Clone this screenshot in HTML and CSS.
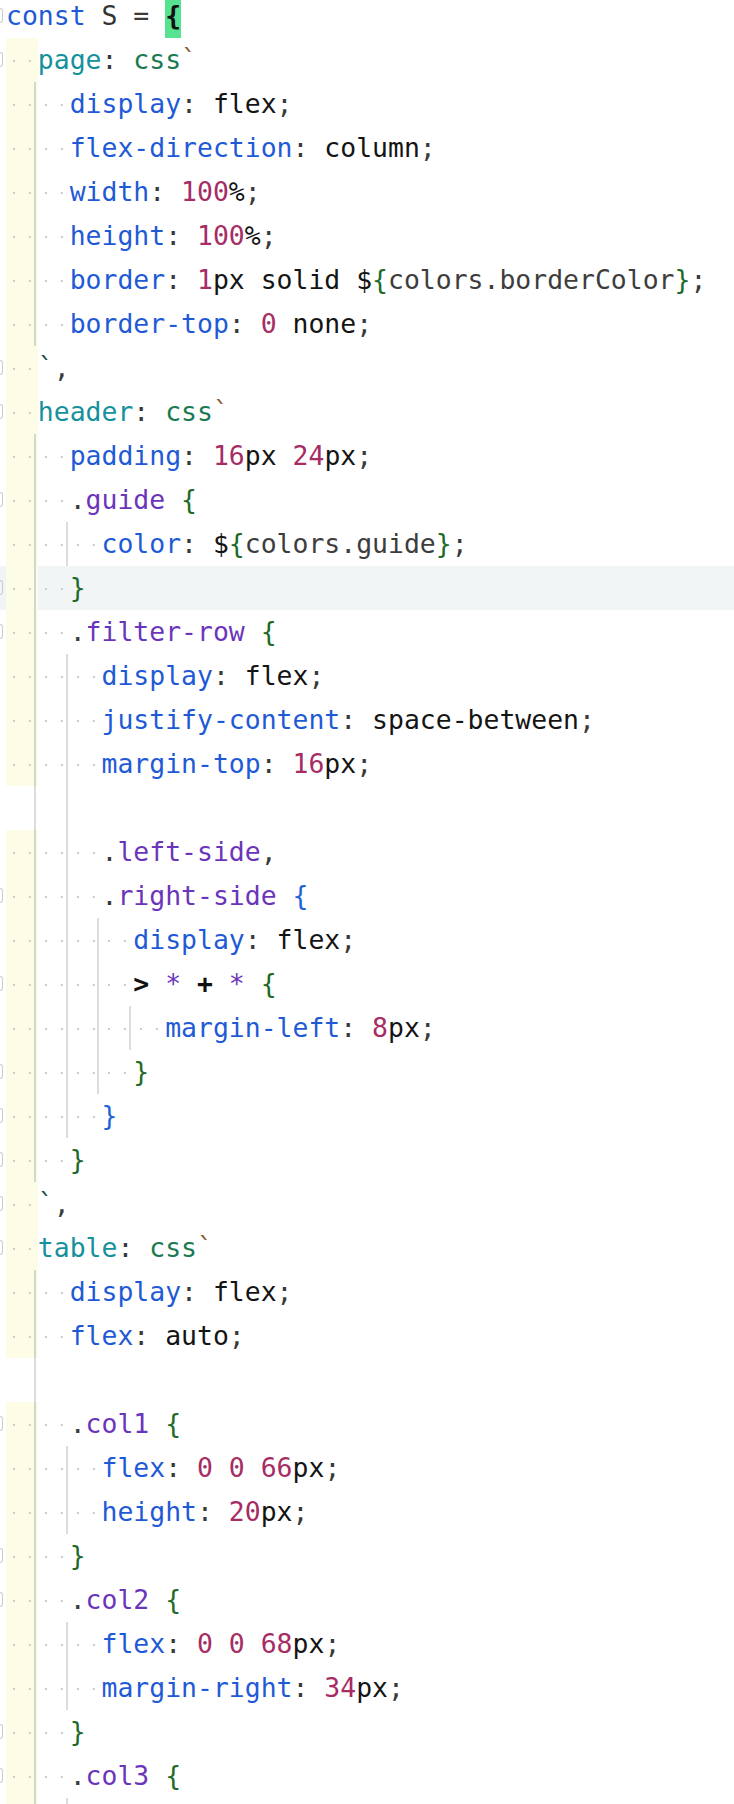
FILE: index.html
```html
<!DOCTYPE html>
<html>
<head>
<meta charset="utf-8">
<link rel="stylesheet" href="styles.css">
</head>
<body>
<div class="ed">
<div class="ln"><span class="g f"></span><span class="c"><span class="k">const</span><span class="v"> S </span><span class="p">=</span> <span class="bm">{</span></span></div>
<div class="ln"><span class="g f"></span><span class="i y"></span><span class="c"><span class="key">page</span><span class="p">:</span> <span class="fn">css</span><span class="bt">`</span></span></div>
<div class="ln"><span class="g"></span><span class="i y gd"></span><span class="i"></span><span class="c"><span class="k">display</span><span class="p">:</span> <span class="t">flex</span><span class="p">;</span></span></div>
<div class="ln"><span class="g"></span><span class="i y gd"></span><span class="i"></span><span class="c"><span class="k">flex-direction</span><span class="p">:</span> <span class="t">column</span><span class="p">;</span></span></div>
<div class="ln"><span class="g"></span><span class="i y gd"></span><span class="i"></span><span class="c"><span class="k">width</span><span class="p">:</span> <span class="n">100</span><span class="t">%</span><span class="p">;</span></span></div>
<div class="ln"><span class="g"></span><span class="i y gd"></span><span class="i"></span><span class="c"><span class="k">height</span><span class="p">:</span> <span class="n">100</span><span class="t">%</span><span class="p">;</span></span></div>
<div class="ln"><span class="g"></span><span class="i y gd"></span><span class="i"></span><span class="c"><span class="k">border</span><span class="p">:</span> <span class="n">1</span><span class="t">px solid $</span><span class="br1">{</span><span class="iv">colors.borderColor</span><span class="br1">}</span><span class="p">;</span></span></div>
<div class="ln"><span class="g"></span><span class="i y gd"></span><span class="i"></span><span class="c"><span class="k">border-top</span><span class="p">:</span> <span class="n">0</span> <span class="t">none</span><span class="p">;</span></span></div>
<div class="ln"><span class="g f"></span><span class="i y"></span><span class="c"><span class="bt2">`</span><span class="p">,</span></span></div>
<div class="ln"><span class="g f"></span><span class="i y"></span><span class="c"><span class="key">header</span><span class="p">:</span> <span class="fn">css</span><span class="bt">`</span></span></div>
<div class="ln"><span class="g"></span><span class="i y gd"></span><span class="i"></span><span class="c"><span class="k">padding</span><span class="p">:</span> <span class="n">16</span><span class="t">px </span><span class="n">24</span><span class="t">px</span><span class="p">;</span></span></div>
<div class="ln"><span class="g f"></span><span class="i y gd"></span><span class="i"></span><span class="c"><span class="p">.</span><span class="s">guide</span> <span class="br1">{</span></span></div>
<div class="ln"><span class="g"></span><span class="i y gd"></span><span class="i gd"></span><span class="i"></span><span class="c"><span class="k">color</span><span class="p">:</span> <span class="t">$</span><span class="br1">{</span><span class="iv">colors.guide</span><span class="br1">}</span><span class="p">;</span></span></div>
<div class="ln cur"><span class="g f"></span><span class="i y gd"></span><span class="i"></span><span class="c"><span class="br1">}</span></span></div>
<div class="ln"><span class="g f"></span><span class="i y gd"></span><span class="i"></span><span class="c"><span class="p">.</span><span class="s">filter-row</span> <span class="br1">{</span></span></div>
<div class="ln"><span class="g"></span><span class="i y gd"></span><span class="i gd"></span><span class="i"></span><span class="c"><span class="k">display</span><span class="p">:</span> <span class="t">flex</span><span class="p">;</span></span></div>
<div class="ln"><span class="g"></span><span class="i y gd"></span><span class="i gd"></span><span class="i"></span><span class="c"><span class="k">justify-content</span><span class="p">:</span> <span class="t">space-between</span><span class="p">;</span></span></div>
<div class="ln"><span class="g"></span><span class="i y gd"></span><span class="i gd"></span><span class="i"></span><span class="c"><span class="k">margin-top</span><span class="p">:</span> <span class="n">16</span><span class="t">px</span><span class="p">;</span></span></div>
<div class="ln"><span class="g"></span><span class="i b gd"></span><span class="i b gd"></span></div>
<div class="ln"><span class="g"></span><span class="i y gd"></span><span class="i gd"></span><span class="i"></span><span class="c"><span class="p">.</span><span class="s">left-side</span><span class="p">,</span></span></div>
<div class="ln"><span class="g f"></span><span class="i y gd"></span><span class="i gd"></span><span class="i"></span><span class="c"><span class="p">.</span><span class="s">right-side</span> <span class="br2">{</span></span></div>
<div class="ln"><span class="g"></span><span class="i y gd"></span><span class="i gd"></span><span class="i gd"></span><span class="i"></span><span class="c"><span class="k">display</span><span class="p">:</span> <span class="t">flex</span><span class="p">;</span></span></div>
<div class="ln"><span class="g f"></span><span class="i y gd"></span><span class="i gd"></span><span class="i gd"></span><span class="i"></span><span class="c"><span class="op">&gt;</span> <span class="s">*</span> <span class="op">+</span> <span class="s">*</span> <span class="br1">{</span></span></div>
<div class="ln"><span class="g"></span><span class="i y gd"></span><span class="i gd"></span><span class="i gd"></span><span class="i gd"></span><span class="i"></span><span class="c"><span class="k">margin-left</span><span class="p">:</span> <span class="n">8</span><span class="t">px</span><span class="p">;</span></span></div>
<div class="ln"><span class="g f"></span><span class="i y gd"></span><span class="i gd"></span><span class="i gd"></span><span class="i"></span><span class="c"><span class="br1">}</span></span></div>
<div class="ln"><span class="g f"></span><span class="i y gd"></span><span class="i gd"></span><span class="i"></span><span class="c"><span class="br2">}</span></span></div>
<div class="ln"><span class="g f"></span><span class="i y gd"></span><span class="i"></span><span class="c"><span class="br1">}</span></span></div>
<div class="ln"><span class="g f"></span><span class="i y"></span><span class="c"><span class="bt2">`</span><span class="p">,</span></span></div>
<div class="ln"><span class="g f"></span><span class="i y"></span><span class="c"><span class="key">table</span><span class="p">:</span> <span class="fn">css</span><span class="bt">`</span></span></div>
<div class="ln"><span class="g"></span><span class="i y gd"></span><span class="i"></span><span class="c"><span class="k">display</span><span class="p">:</span> <span class="t">flex</span><span class="p">;</span></span></div>
<div class="ln"><span class="g"></span><span class="i y gd"></span><span class="i"></span><span class="c"><span class="k">flex</span><span class="p">:</span> <span class="t">auto</span><span class="p">;</span></span></div>
<div class="ln"><span class="g"></span><span class="i b gd"></span></div>
<div class="ln"><span class="g f"></span><span class="i y gd"></span><span class="i"></span><span class="c"><span class="p">.</span><span class="s">col1</span> <span class="br1">{</span></span></div>
<div class="ln"><span class="g"></span><span class="i y gd"></span><span class="i gd"></span><span class="i"></span><span class="c"><span class="k">flex</span><span class="p">:</span> <span class="n">0</span> <span class="n">0</span> <span class="n">66</span><span class="t">px</span><span class="p">;</span></span></div>
<div class="ln"><span class="g"></span><span class="i y gd"></span><span class="i gd"></span><span class="i"></span><span class="c"><span class="k">height</span><span class="p">:</span> <span class="n">20</span><span class="t">px</span><span class="p">;</span></span></div>
<div class="ln"><span class="g f"></span><span class="i y gd"></span><span class="i"></span><span class="c"><span class="br1">}</span></span></div>
<div class="ln"><span class="g f"></span><span class="i y gd"></span><span class="i"></span><span class="c"><span class="p">.</span><span class="s">col2</span> <span class="br1">{</span></span></div>
<div class="ln"><span class="g"></span><span class="i y gd"></span><span class="i gd"></span><span class="i"></span><span class="c"><span class="k">flex</span><span class="p">:</span> <span class="n">0</span> <span class="n">0</span> <span class="n">68</span><span class="t">px</span><span class="p">;</span></span></div>
<div class="ln"><span class="g"></span><span class="i y gd"></span><span class="i gd"></span><span class="i"></span><span class="c"><span class="k">margin-right</span><span class="p">:</span> <span class="n">34</span><span class="t">px</span><span class="p">;</span></span></div>
<div class="ln"><span class="g f"></span><span class="i y gd"></span><span class="i"></span><span class="c"><span class="br1">}</span></span></div>
<div class="ln"><span class="g f"></span><span class="i y gd"></span><span class="i"></span><span class="c"><span class="p">.</span><span class="s">col3</span> <span class="br1">{</span></span></div>
<div class="ln"><span class="g"></span><span class="i y gd"></span><span class="i gd"></span><span class="i"></span></div>
</div>
</body>
</html>
```
FILE: styles.css
```css
html, body {
  margin: 0;
  padding: 0;
  background: #ffffff;
}

.ed {
  margin-top: -6px;
  font-family: "DejaVu Sans Mono", "Liberation Mono", monospace;
  font-size: 26.45px;
  color: #141414;
}

.ln {
  display: flex;
  height: 44px;
  line-height: 44px;
  white-space: pre;
}

.ln.cur {
  background: #f2f5f6;
}

.g {
  flex: 0 0 6px;
  display: flex;
  align-items: center;
}

.g.f::before {
  content: "";
  box-sizing: border-box;
  width: 3px;
  height: 15px;
  margin-top: -2px;
  border: 1.5px solid #cbcbcb;
  border-left: 0;
  border-radius: 0 3px 3px 0;
}

.i {
  --gc: #dcdcdc;
  --dots: radial-gradient(circle at 50% 23px, #cbcbcb 0 1px, rgba(203,203,203,0) 1.5px);
  --guide: linear-gradient(transparent, transparent);
  flex: 0 0 2ch;
  width: 2ch;
  height: 44px;
  background-image: var(--guide), var(--dots);
  background-size: 100% 100%, 1ch 44px;
  background-repeat: no-repeat, repeat-x;
}

.i.y {
  --gc: #d0d9c9;
  background-color: #fdfde7;
}

.i.b {
  --dots: linear-gradient(transparent, transparent);
}

.i.gd {
  --guide: linear-gradient(to right, transparent calc(100% - 4px), var(--gc) calc(100% - 4px), var(--gc) calc(100% - 2px), transparent calc(100% - 2px));
}

.c {
  display: block;
}

.k { color: #1f5ad6; }
.key { color: #15919b; }
.fn { color: #1a7a52; }
.n { color: #a62c63; }
.p { color: #3a3a3a; }
.t { color: #141414; }
.v { color: #333333; }
.s { color: #6b35bb; }
.br1 { color: #1e6a28; }
.br2 { color: #1f62d8; }
.bt { color: #8d5a2c; }
.bt2 { color: #1a4e3d; }
.iv { color: #3d3d3d; }
.op { color: #111111; font-weight: bold; }

.bm {
  display: inline-block;
  height: 44px;
  background: #55e391;
  color: #111111;
  font-weight: bold;
}
```
